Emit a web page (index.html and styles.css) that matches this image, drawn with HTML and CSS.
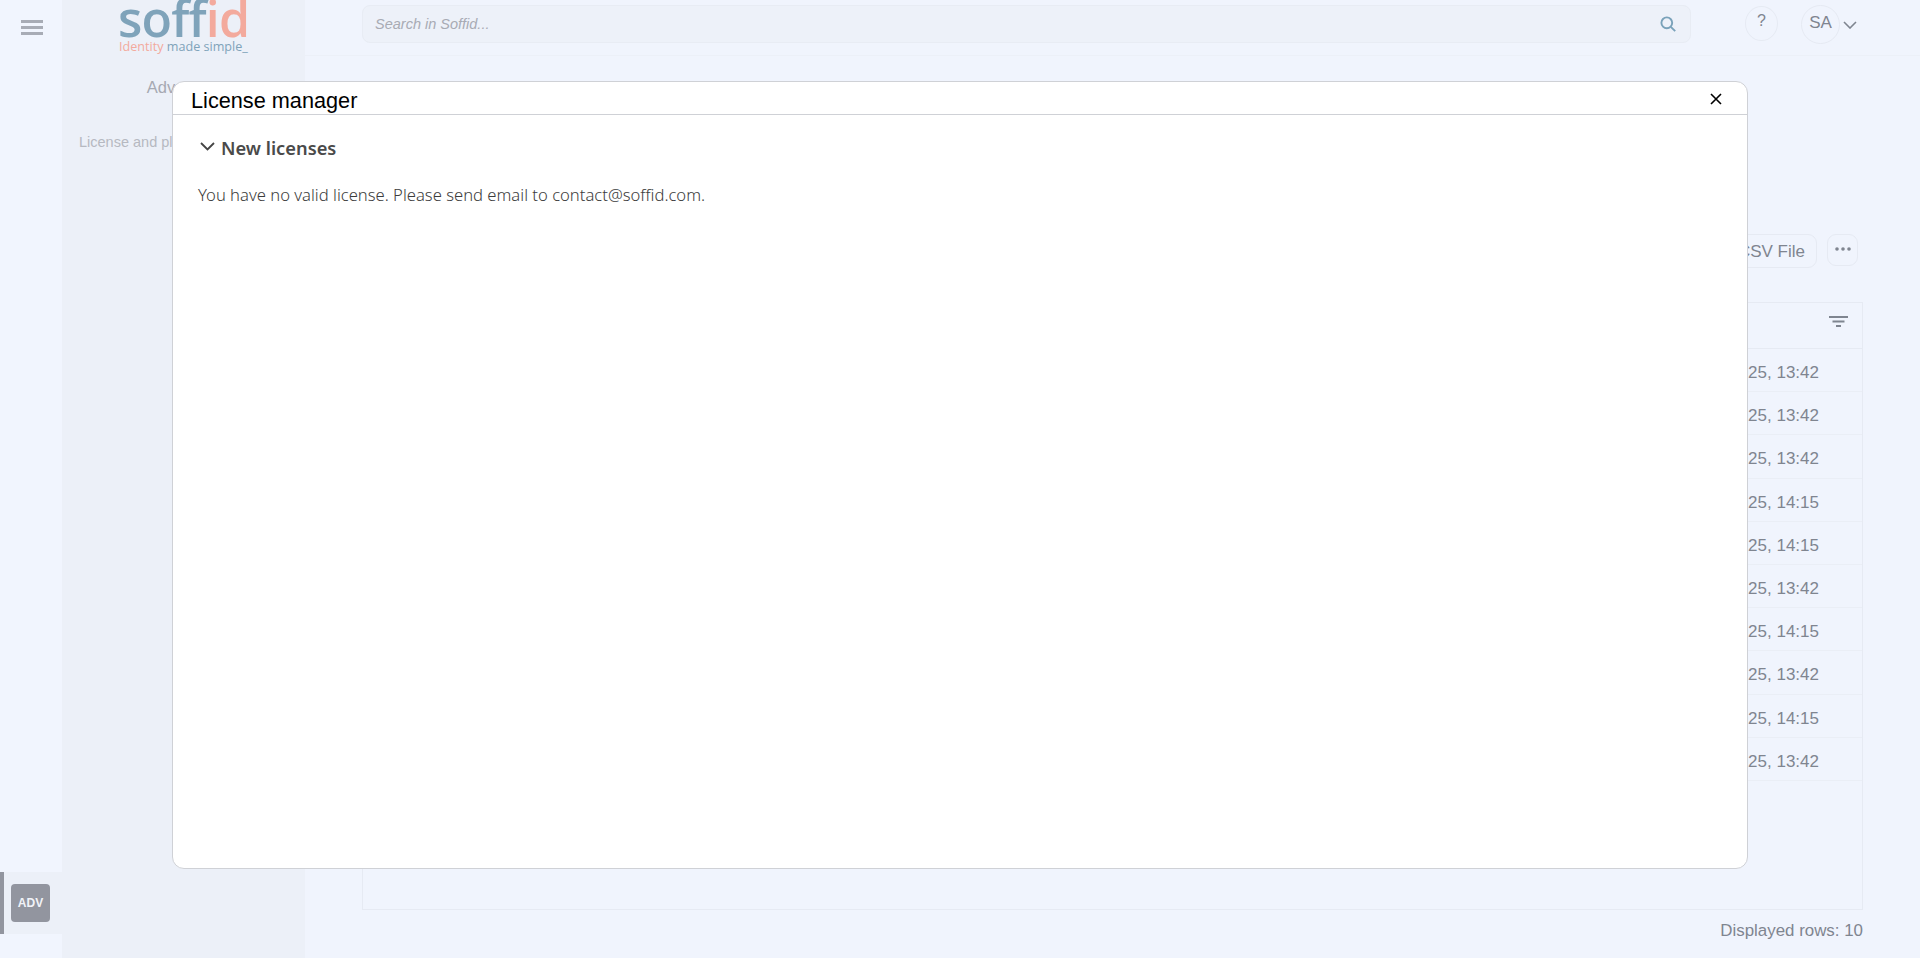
FILE: index.html
```html
<!DOCTYPE html>
<html lang="en">
<head>
<meta charset="utf-8">
<title>License manager</title>
<link rel="stylesheet" href="styles.css">
</head>
<body>
<div class="app">
  <nav class="rail">
    <button class="burger" aria-label="Menu">
      <svg width="22" height="15" viewBox="0 0 22 15"><path d="M0 1.600h22M0 7.500h22M0 13.400h22" stroke="#a8acb6" stroke-width="3" fill="none"/></svg>
    </button>
    <div class="rail-item"><span class="rail-tile">ADV</span></div>
  </nav>
  <aside class="sidebar">
    <div class="logo">
      <div class="logo-word"><span class="blue">soff</span><span class="pink">id</span></div>
      <div class="logo-tag"><span class="pink">Identity</span> <span class="blue">made simple_</span></div>
    </div>
    <div class="side-title">Advanced</div>
    <div class="side-link">License and plugins</div>
  </aside>
  <main class="main">
    <header class="topbar">
      <div class="search">
        <span class="search-text">Search in Soffid...</span>
        <svg width="16" height="16" viewBox="0 0 16 16"><circle cx="6.800" cy="6.800" r="5.400" stroke="#7aa2ba" stroke-width="1.900" fill="none"/><path d="M10.800 10.800l4.400 4.400" stroke="#7aa2ba" stroke-width="1.900" fill="none"/></svg>
      </div>
      <div class="help">?</div>
      <div class="avatar">SA</div>
      <svg class="avatar-caret" width="14" height="8" viewBox="0 0 14 8"><path d="M1 1l6 6 6-6" stroke="#7f8590" stroke-width="1.600" fill="none"/></svg>
    </header>
    <div class="toolbar">
      <button class="btn">Import CSV File</button>
      <button class="btn-more" aria-label="More"><svg width="16" height="4" viewBox="0 0 16 4"><circle cx="2" cy="2" r="1.800" fill="#7f8590"/><circle cx="8" cy="2" r="1.800" fill="#7f8590"/><circle cx="14" cy="2" r="1.800" fill="#7f8590"/></svg></button>
    </div>
    <section class="table">
      <div class="thead">
        <svg width="19" height="11" viewBox="0 0 19 11"><path d="M0 1h19M3.500 5.500h12M7 10h5" stroke="#7f8590" stroke-width="1.900" fill="none"/></svg>
      </div>
      <div class="row">01/01/2025, 13:42</div>
      <div class="row">01/01/2025, 13:42</div>
      <div class="row">01/01/2025, 13:42</div>
      <div class="row">01/01/2025, 14:15</div>
      <div class="row">01/01/2025, 14:15</div>
      <div class="row">01/01/2025, 13:42</div>
      <div class="row">01/01/2025, 14:15</div>
      <div class="row">01/01/2025, 13:42</div>
      <div class="row">01/01/2025, 14:15</div>
      <div class="row">01/01/2025, 13:42</div>
    </section>
    <div class="footer">Displayed rows: 10</div>
  </main>
</div>
<div class="modal">
  <div class="modal-head">
    <span class="modal-title">License manager</span>
    <svg class="modal-close" width="12" height="12" viewBox="0 0 12 12"><path d="M1 1l10 10M11 1L1 11" stroke="#000" stroke-width="1.600" fill="none"/></svg>
  </div>
  <div class="modal-body">
    <div class="section-head">
      <svg class="section-caret" width="15" height="9" viewBox="0 0 15 9"><path d="M1 1l6.500 6.500L14 1" stroke="#444" stroke-width="1.800" fill="none"/></svg>
      <span class="section-title">New licenses</span>
    </div>
    <p class="section-text">You have no valid license. Please send email to contact@soffid.com.</p>
  </div>
</div>
</body>
</html>
```
FILE: styles.css
```css
* { box-sizing: border-box; }
html, body { margin: 0; height: 958px; overflow: hidden; }
body { font-family: "Liberation Sans", Arial, sans-serif; background: #f0f4fd; color: #7f8590; }
.app { display: flex; height: 958px; }

.rail { width: 62px; display: flex; flex-direction: column; justify-content: space-between; padding-bottom: 24px; background: #f1f5fe; }
.burger { border: 0; background: none; padding: 20px 0 0 21px; height: 40px; display: flex; align-items: flex-start; }
.rail-item { height: 62px; display: flex; align-items: center; background: #ecf0f8; border-left: 4px solid #92959f; padding-left: 7px; }
.rail-tile { width: 39px; height: 38px; border-radius: 4px; background: #92959f; color: #f1f3f8; font-size: 12px; font-weight: 700; display: flex; align-items: center; justify-content: center; }

.sidebar { width: 243px; background: #ecf0f8; display: flex; flex-direction: column; align-items: center; }
.logo { height: 60px; width: 100%; overflow: hidden; padding-left: 56px; }
.logo-word { font-family: "Open Sans", sans-serif; font-size: 50px; font-weight: 600; line-height: 40px; margin-top: -2px; letter-spacing: -0.800px; }
.logo-tag { font-family: "Open Sans", sans-serif; font-size: 12.600px; line-height: 16px; margin: 1px 0 0 1px; }
.blue { color: #7fa3ba; }
.pink { color: #f3aa9d; }
.side-title { font-size: 16.500px; line-height: 22px; color: #a6a9b2; margin-top: 16px; }
.side-link { font-size: 14.500px; line-height: 18px; color: #b6b9c1; margin-top: 35px; align-self: flex-start; padding-left: 17px; }

.main { flex: 1; display: flex; flex-direction: column; padding-right: 57px; }
.topbar { height: 56px; margin-right: -57px; padding: 5px 56px 0 57px; border-bottom: 1px solid #ecf0f8; display: flex; align-items: flex-start; }
.search { width: 1329px; height: 38px; border: 1px solid #e8ecf4; border-radius: 8px; background: #edf1f9; display: flex; align-items: center; justify-content: space-between; padding: 0 14px 0 12px; margin-right: 54px; }
.search-text { font-size: 14.500px; font-style: italic; color: #a8abb4; }
.help { width: 33px; height: 35px; margin-top: 1px; border: 1px solid #e6eaf3; border-radius: 50%; font-size: 16px; text-align: center; line-height: 28px; margin-right: 23px; }
.avatar { width: 39px; height: 39px; border: 1px solid #e6eaf3; border-radius: 50%; font-size: 17px; text-align: center; line-height: 34px; }
.avatar-caret { margin: 16px 0 0 3px; }

.toolbar { height: 56px; margin-top: 178px; margin-left: 57px; margin-right: 5px; display: flex; justify-content: flex-end; align-items: flex-start; gap: 10px; }
.btn { height: 34px; padding: 2px 11px 0; border: 1px solid #e6eaf3; border-radius: 9px; background: none; color: #7f8590; font: 17px "Liberation Sans", Arial, sans-serif; }
.btn-more { width: 31px; height: 32px; border: 1px solid #e6eaf3; border-radius: 9px; background: none; padding: 0 0 3px; line-height: 0; }

.table { margin-left: 57px; height: 608px; margin-top: 12px; border: 1px solid #e6eaf3; display: flex; flex-direction: column; }
.thead { height: 46px; flex: none; border-bottom: 1px solid #e6eaf3; display: flex; justify-content: flex-end; align-items: center; padding: 0 14px 9px 0; }
.row { height: 43.200px; flex: none; border-bottom: 1px solid #eaeef6; text-align: right; padding: 4px 43px 0 0; font-size: 17px; line-height: 39px; }
.footer { margin-left: 57px; text-align: right; font-size: 16.900px; line-height: 20px; margin-top: 11px; }

.modal { position: absolute; left: 172px; top: 81px; width: 1576px; height: 788px; background: #fff; border: 1px solid #cfd1d6; border-radius: 12px; display: flex; flex-direction: column; }
.modal-head { height: 33px; flex: none; border-bottom: 1px solid #cfd1d6; display: flex; justify-content: space-between; align-items: center; padding: 0 25px 0 18px; }
.modal-title { font-size: 21.700px; line-height: 33px; color: #000; padding-top: 4px; }
.modal-close { margin-top: 2px; }
.modal-body { padding: 21px 20px; }
.section-head { display: flex; align-items: center; gap: 6px; padding-left: 7px; height: 22px; }
.section-caret { margin-top: -2px; }
.section-title { font-family: "Noto Sans", sans-serif; font-size: 18.300px; font-weight: 600; color: #4a4a4a; }
.section-text { font-family: "Noto Sans", sans-serif; font-size: 16.640px; font-weight: 300; color: #3c3c3c; margin: 26px 0 0 5px; line-height: 22px; }
```
